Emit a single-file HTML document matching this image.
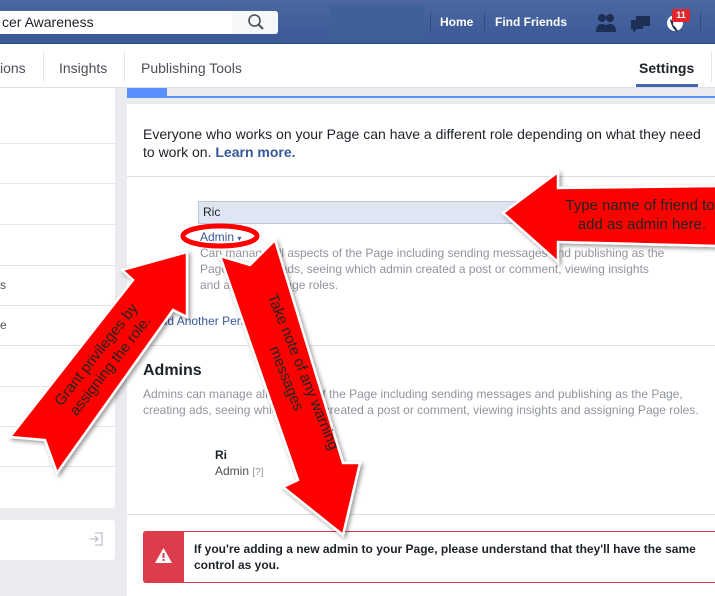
<!DOCTYPE html>
<html><head><meta charset="utf-8"><style>
*{margin:0;padding:0;box-sizing:border-box}
body{width:715px;height:596px;overflow:hidden;background:#e9ebee;font-family:"Liberation Sans",Arial,sans-serif;position:relative}
.abs{position:absolute}
.top{left:0;top:0;width:715px;height:44px;background:linear-gradient(#4c67a1,#3b5998);border-bottom:1px solid #29487d}
.tabs{left:0;top:44px;width:715px;height:44px;background:#fff;border-bottom:1px solid #dddfe2}
.tab{position:absolute;top:16px;font-size:14px;color:#4b4f56}
.vd{position:absolute;top:8px;width:1px;height:30px;background:#e5e5e5}
.side{left:0;top:88px;width:115px;height:420px;background:#fff;border-radius:0 0 3px 0}
.row{position:absolute;left:0;width:115px;height:1px;background:#e5e5e5}
.main{left:127px;top:104px;width:588px;height:492px;background:#fff}
.g{color:#90949c;font-size:12px;line-height:16px}
.hr{position:absolute;left:127px;width:588px;height:1px;background:#dddfe2}
</style></head><body>
<div class="abs top">
 <div class="abs" style="left:0;top:11px;width:278px;height:23px;background:#fff;border-radius:0 3px 3px 0"></div>
 <div class="abs" style="left:232px;top:11px;width:46px;height:23px;background:#f6f7f9;border-radius:0 3px 3px 0"></div>
 <div class="abs" style="left:2px;top:14px;font-size:14px;color:#1d2129">cer Awareness</div>
 <svg class="abs" style="left:247px;top:13px" width="18" height="18" viewBox="0 0 18 18"><circle cx="7.5" cy="7.5" r="5.5" fill="none" stroke="#4b4f56" stroke-width="1.6"/><path d="M11.5 11.5L16 16" stroke="#4b4f56" stroke-width="2"/></svg>
 <div class="abs" style="left:329px;top:5px;width:95px;height:35px;background:#40609a"></div>
 <div class="abs" style="left:430px;top:12px;width:1px;height:20px;background:#324c82"></div>
 <div class="abs" style="left:440px;top:15px;font-size:12px;font-weight:bold;color:#fff">Home</div>
 <div class="abs" style="left:484px;top:12px;width:1px;height:20px;background:#324c82"></div>
 <div class="abs" style="left:495px;top:15px;font-size:12px;font-weight:bold;color:#fff">Find Friends</div>
 <svg class="abs" style="left:596px;top:12px" width="100" height="24" viewBox="0 0 100 24">
  <g fill="#1d2f55"><circle cx="6" cy="6" r="4"/><path d="M0 20q0-8 6-8q6 0 6 8z"/><circle cx="14" cy="6" r="4"/><path d="M8 20q0-8 6-8q6 0 6 8z"/>
  <path d="M40 4h14v10h-8l-4 3v-3h-2z"/><path d="M35 8h12v9h-6l-4 4v-4h-2z"/></g>
  <circle cx="79" cy="11" r="8" fill="#fff"/><path d="M74 7q4 2 3 6q4 3 5 7q-6 -2 -8-13z" fill="#1d2f55"/>
 </svg>
 <div class="abs" style="left:672px;top:9px;width:18px;height:13px;background:#e0262c;border-radius:2px;color:#fff;font-size:9px;font-weight:bold;text-align:center;line-height:13px">11</div>
 <div class="abs" style="left:700px;top:12px;width:1px;height:20px;background:#324c82"></div>
</div>
<div class="abs tabs">
 <div class="tab" style="left:0">ions</div><div class="vd" style="left:43px"></div>
 <div class="tab" style="left:59px">Insights</div><div class="vd" style="left:124px"></div>
 <div class="tab" style="left:141px">Publishing Tools</div>
 <div class="tab" style="left:639px;font-weight:bold;color:#1d2129">Settings</div>
 <div class="abs" style="left:636px;top:40px;width:62px;height:3px;background:#4267b2"></div>
 <div class="vd" style="left:711px"></div>
</div>
<div class="abs side">
 <div class="row" style="top:55px"></div><div class="row" style="top:95px"></div><div class="row" style="top:136px"></div><div class="row" style="top:177px"></div><div class="row" style="top:217px"></div><div class="row" style="top:257px"></div><div class="row" style="top:298px"></div><div class="row" style="top:338px"></div><div class="row" style="top:378px"></div>
 <div class="abs" style="left:0;top:190px;font-size:12px;color:#4b4f56">s</div>
 <div class="abs" style="left:0;top:230px;font-size:12px;color:#4b4f56">e</div>
</div>
<div class="abs" style="left:0;top:520px;width:115px;height:40px;background:#fff;border-radius:0 3px 3px 0"></div>
<svg class="abs" style="left:89px;top:532px" width="14" height="14" viewBox="0 0 14 14"><path d="M6 1h7v12h-7M1 7h8M6 4l3 3-3 3" fill="none" stroke="#bec2c9" stroke-width="1.3"/></svg>
<div class="abs" style="left:127px;top:88px;width:40px;height:9px;background:#5890ff"></div>
<div class="abs" style="left:127px;top:96px;width:588px;height:2px;background:#5890ff"></div>
<div class="abs main"></div>
<div class="abs" style="left:143px;top:125px;font-size:14px;line-height:18px;color:#1d2129;white-space:nowrap">Everyone who works on your Page can have a different role depending on what they need<br>to work on. <b style="color:#365899">Learn more.</b></div>
<div class="hr" style="top:176px"></div>
<div class="abs" style="left:198px;top:201px;width:520px;height:23px;background:#dfe5f2;border:1px solid #bdc7d8"></div>
<div class="abs" style="left:203px;top:205px;font-size:12px;color:#1d2129">Ric</div>
<div class="abs" style="left:200px;top:230px;font-size:12px;color:#365899">Admin <span style="font-size:8px">▾</span></div>
<div class="abs g" style="left:200px;top:245px;white-space:nowrap">Can manage all aspects of the Page including sending messages and publishing as the<br>Page, creating ads, seeing which admin created a post or comment, viewing insights<br>and assigning Page roles.</div>
<div class="abs" style="left:143px;top:314px;font-size:12px;color:#365899">+ Add Another Person</div>
<div class="hr" style="top:345px"></div>
<div class="abs" style="left:143px;top:362px;font-size:16px;font-weight:bold;color:#1d2129">Admins</div>
<div class="abs g" style="left:143px;top:386px;white-space:nowrap">Admins can manage all aspects of the Page including sending messages and publishing as the Page,<br>creating ads, seeing which admin created a post or comment, viewing insights and assigning Page roles.</div>
<div class="abs" style="left:215px;top:448px;font-size:12px;font-weight:bold;color:#1d2129">Ri</div>
<div class="abs" style="left:215px;top:464px;font-size:12px;color:#4b4f56">Admin <span style="font-size:10px;color:#90949c">[?]</span></div>
<div class="hr" style="top:514px"></div>
<div class="abs" style="left:143px;top:531px;width:580px;height:52px;border:1px solid #dd3c4c;border-radius:3px;background:#fff"></div>
<div class="abs" style="left:143px;top:531px;width:41px;height:52px;background:#dd3c4c;border-radius:3px 0 0 3px"></div>
<svg class="abs" style="left:155px;top:548px" width="17" height="15" viewBox="0 0 17 15"><path d="M8.5 0L17 15H0z" fill="#fff"/><rect x="7.5" y="5" width="2" height="5" fill="#dd3c4c"/><rect x="7.5" y="11" width="2" height="2" fill="#dd3c4c"/></svg>
<div class="abs" style="left:194px;top:541px;font-size:12px;font-weight:bold;line-height:16px;color:#1d2129;white-space:nowrap">If you're adding a new admin to your Page, please understand that they'll have the same<br>control as you.</div>
<svg class="abs" style="left:0;top:0" width="715" height="596" viewBox="0 0 715 596">
 <defs><filter id="s" x="-20%" y="-20%" width="140%" height="140%"><feDropShadow dx="2" dy="2" stdDeviation="2" flood-color="#000" flood-opacity="0.4"/></filter></defs>
 <g fill="#ff0000" stroke="#fff" stroke-width="2.5" stroke-linejoin="miter" filter="url(#s)">
  <path d="M503 213L558 172L558 188L720 186L720 246L558 242L558 262Z"/>
  <path d="M187 252L187 317L173 310L57 473L45 440L10 437L133 280L122 270Z"/>
  <path d="M220 256L250 265L275 240L343 463L360 463L343 535L283 487L298 480Z"/>
 </g>
 <ellipse cx="220" cy="236" rx="37" ry="10" fill="none" stroke="#ff0000" stroke-width="5"/>
 <g font-family="Liberation Sans,Arial,sans-serif" font-size="15" fill="#222" text-anchor="middle">
  <text x="640" y="210">Type name of friend to</text>
  <text x="642" y="229">add as admin here.</text>
  <g transform="translate(103,360) rotate(-52)"><text x="0" y="-4">Grant privileges by</text><text x="0" y="14">assigning the role.</text></g>
  <g transform="translate(295,375) rotate(68)"><text x="0" y="-4">Take note of any warning</text><text x="0" y="14">messages</text></g>
 </g>
</svg>
</body></html>
